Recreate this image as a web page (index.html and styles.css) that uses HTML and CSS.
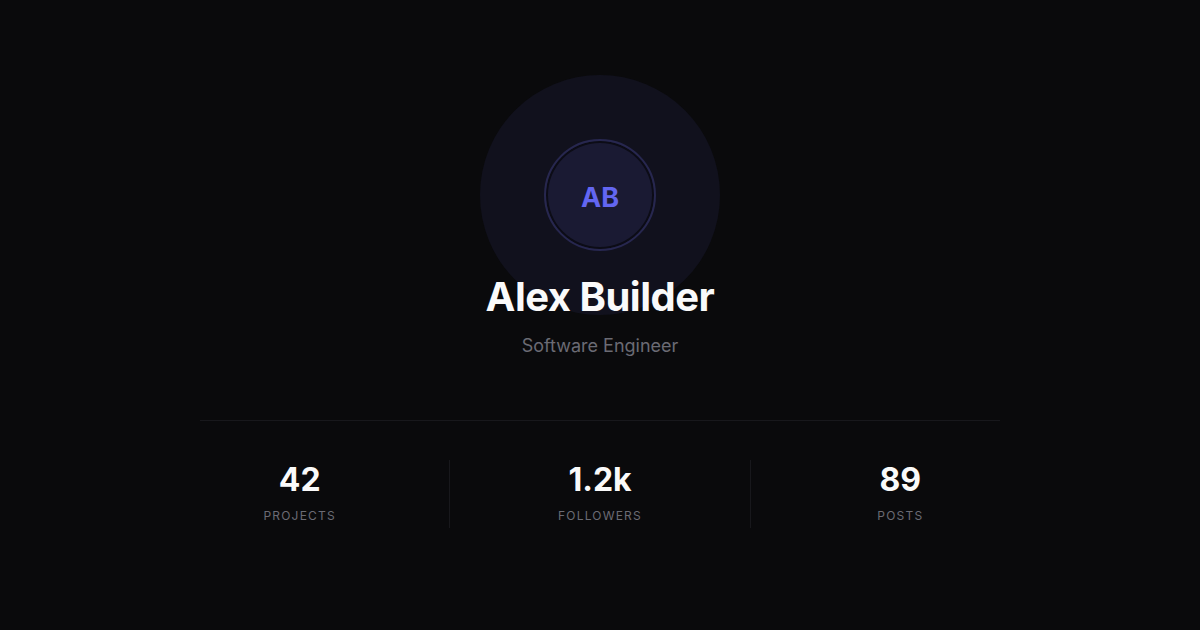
FILE: index.html
```html
<!DOCTYPE html>
<html lang="en">
<head>
<meta charset="utf-8">
<title>Alex Builder</title>
<link rel="stylesheet" href="styles.css">
</head>
<body>
<main class="card">
  <div class="avatar-wrap">
    <div class="glow"></div>
    <div class="avatar"><span>AB</span></div>
  </div>
  <h1 class="name">Alex Builder</h1>
  <p class="role">Software Engineer</p>
  <div class="divider"></div>
  <section class="stats">
    <div class="stat">
      <div class="num">42</div>
      <div class="label">Projects</div>
    </div>
    <div class="stat">
      <div class="num">1.2k</div>
      <div class="label">Followers</div>
    </div>
    <div class="stat">
      <div class="num">89</div>
      <div class="label">Posts</div>
    </div>
  </section>
</main>
</body>
</html>
```
FILE: styles.css
```css
* { box-sizing: border-box; }
html, body {
  margin: 0;
  padding: 0;
  width: 1200px;
  height: 630px;
  overflow: hidden;
  background: #0a0a0c;
  font-family: Inter, "Noto Sans", sans-serif;
}
.card {
  display: flex;
  flex-direction: column;
  align-items: center;
  padding-top: 139px;
}
.avatar-wrap {
  position: relative;
  width: 112px;
  height: 112px;
}
.glow {
  position: absolute;
  left: -64px;
  top: -64px;
  width: 240px;
  height: 240px;
  border-radius: 50%;
  background: #11111d;
}
.avatar {
  position: relative;
  width: 112px;
  height: 112px;
  border-radius: 50%;
  border: 2px solid #27274f;
  box-shadow: inset 0 0 0 2px #0c0c16;
  background: #1a1a33;
  display: flex;
  align-items: center;
  justify-content: center;
}
.avatar span {
  color: #6366f1;
  font-weight: 700;
  font-size: 27px;
  line-height: 1;
  margin-top: 5px;
}
.name {
  position: relative;
  margin: 22px 0 0;
  font-size: 40px;
  line-height: 48px;
  font-weight: 700;
  color: #fafafa;
  letter-spacing: -0.5px;
}
.role {
  margin: 13px 0 0;
  font-size: 18px;
  line-height: 24px;
  color: #6b6b74;
}
.divider {
  margin-top: 62px;
  width: 800px;
  height: 1px;
  background: #18181c;
}
.stats {
  margin-top: 39px;
  width: 900px;
  display: flex;
}
.stat {
  flex: 1;
  height: 68px;
  display: flex;
  flex-direction: column;
  align-items: center;
}
.stat + .stat {
  border-left: 1px solid #18181c;
}
.num {
  font-size: 32px;
  line-height: 40px;
  font-weight: 700;
  color: #fafafa;
}
.label {
  margin-top: 8px;
  font-size: 12px;
  line-height: 16px;
  letter-spacing: 1.2px;
  text-transform: uppercase;
  color: #6b6b74;
}
```
